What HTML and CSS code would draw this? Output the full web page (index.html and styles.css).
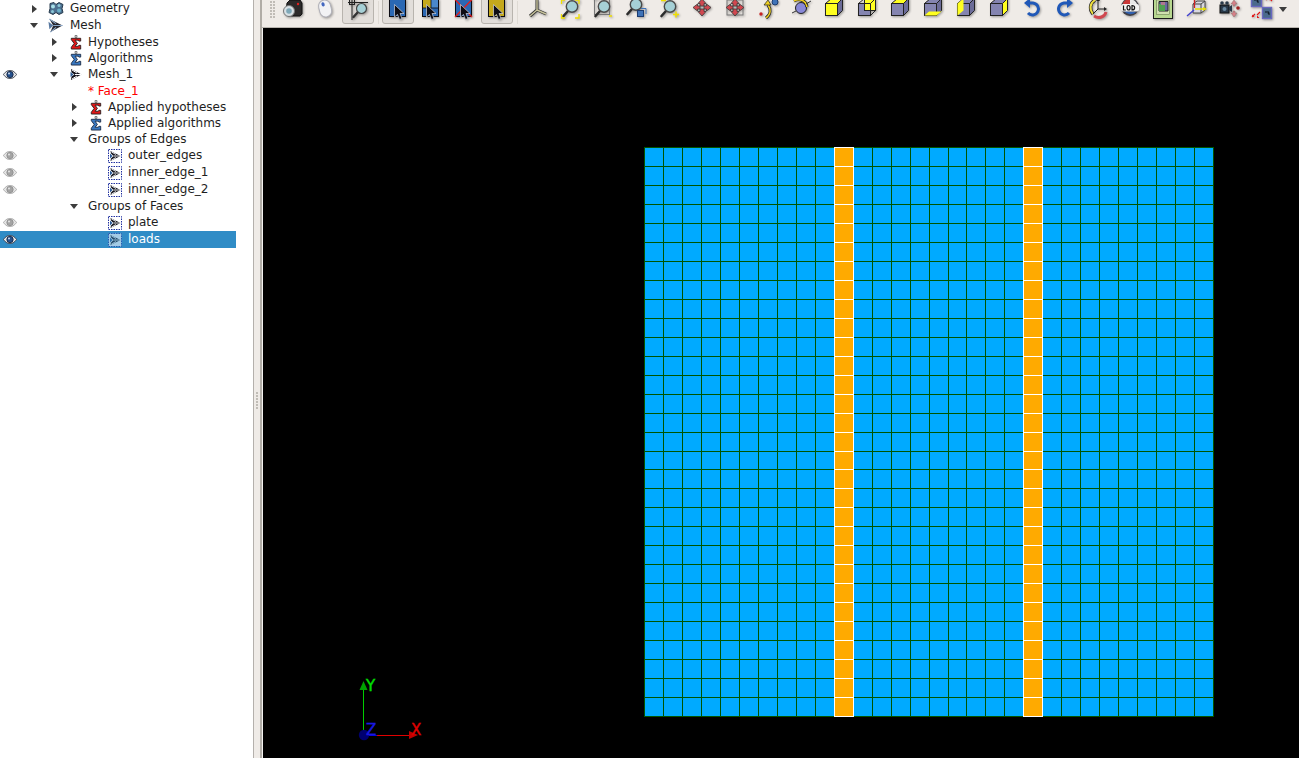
FILE: index.html
```html
<!DOCTYPE html>
<html lang="en">
<head>
<meta charset="utf-8">
<title>Mesh viewer</title>
<link rel="stylesheet" href="styles.css">
</head>
<body>
<svg class="defs" aria-hidden="true">
  <defs>
    <symbol id="geom" viewBox="0 0 16 14">
      <path d="M2 2L6 1L8 3L11 1L15 3L14 7L15 11L11 13L8 11L5 13L1 11L2 7Z" fill="#4c7090" stroke="#263a4c"/>
      <circle cx="5" cy="5" r="2" fill="#a8e0e8"/>
      <circle cx="11" cy="9" r="2" fill="#6ab0c8"/>
      <circle cx="11" cy="4" r="1.500" fill="#8cc8d8"/>
      <circle cx="4.500" cy="10" r="1.500" fill="#8cc8d8"/>
    </symbol>
    <symbol id="eye" viewBox="0 0 14 9">
      <path d="M0.5 4.5C3 1 5 0.5 7 0.5S11 1 13.500 4.5C11 8 9 8.5 7 8.5S3 8 0.5 4.5Z" fill="#e8e8ea" stroke="#3c4450"/>
      <circle cx="7" cy="4.5" r="3.2" fill="#24508c" stroke="#12203a" stroke-width=".8"/>
      <circle cx="6" cy="3.5" r="1" fill="#c8d8ee"/>
    </symbol>
    <symbol id="eye-off" viewBox="0 0 14 9">
      <path d="M0.5 4.5C3 1 5 0.5 7 0.5S11 1 13.500 4.5C11 8 9 8.5 7 8.5S3 8 0.5 4.5Z" fill="#e6e6e6" stroke="#a8a8a8"/>
      <circle cx="7" cy="4.5" r="3.2" fill="#a4a4a4" stroke="#8c8c8c" stroke-width=".8"/>
      <circle cx="6" cy="3.5" r="1" fill="#e4e4e4"/>
    </symbol>
    <symbol id="sigma-red" viewBox="0 0 12 16">
      <path d="M5 0.5h2v2h-2z" fill="none" stroke="#555" stroke-width=".8"/>
      <path d="M1 3.5H11V6.5H9L8.5 5.5H5L7.5 9L5 12H8.5L9 11H11V15H1V13L4 9L1 5Z" fill="#e01818" stroke="#1a1a1a" stroke-width=".9"/>
    </symbol>
    <symbol id="sigma-blue" viewBox="0 0 12 16">
      <path d="M5 0.5h2v2h-2z" fill="none" stroke="#555" stroke-width=".8"/>
      <path d="M1 3.5H11V6.5H9L8.5 5.5H5L7.5 9L5 12H8.5L9 11H11V15H1V13L4 9L1 5Z" fill="#3a78c0" stroke="#14243c" stroke-width=".9"/>
    </symbol>
    <symbol id="mesh" viewBox="0 0 12 12">
      <path d="M1 0.500L11.500 6L1 11.500L1.500 8L4.500 6L1.500 4Z" fill="#14141e"/>
      <path d="M2 1.500L7 4.500M5 6H11.500M2 10.500L7 7.500" stroke="#fff" stroke-width="1"/>
      <path d="M0.500 3.500L3.500 6L0.500 8.500Z" fill="#2c5c98"/>
    </symbol>
    <symbol id="mesh-group" viewBox="0 0 14 14">
      <rect x=".5" y=".5" width="13" height="13" fill="#fff" stroke="#2030a0" stroke-dasharray="1.500 1"/>
      <path d="M2.500 2L12.500 7L2.500 12L3 9.500L5.500 7L3 4.500Z" fill="#14141c"/>
      <path d="M3.500 3L8 5.500M5.500 7H12.500M3.500 11L8 8.500" stroke="#fff" stroke-width=".9"/>
      <path d="M2 4.500L4.500 7L2 9.500Z" fill="#2c5c98"/>
    </symbol>
    <symbol id="cursor" viewBox="0 0 11 16">
      <path d="M0.5 0.5V13L3.5 10.5L5.5 15.5L8 14.5L6 9.5H10Z" fill="#0c0c14" stroke="#cfd2e0" stroke-width=".7"/>
    </symbol>
    <symbol id="lens" viewBox="0 0 24 24">
      <path d="M9 15L4.500 20" stroke="#2c2c2c" stroke-width="2.600" stroke-linecap="round"/>
      <circle cx="13" cy="10.500" r="5.700" fill="#a6d0d6" stroke="#4a4a4a" stroke-width="1.400"/>
    </symbol>
    <symbol id="arrows" viewBox="0 0 24 24">
      <path d="M12 3L16 7.500H14V10H10V7.500H8Z M12 20L8 15.500H10V13H14V15.500H16Z M3 11.500L7.500 8V10H10V13H7.500V15Z M21 11.500L16.500 15V13H14V10H16.500V8Z" fill="#d04850" stroke="#3a3a3a" stroke-width=".8"/>
    </symbol>
  </defs>
</svg>
<div class="app">
  <aside class="tree">
    <div class="row tall"><span class="eye"></span><span class="indent i0"></span><span class="arrow right"></span><svg class="ic big"><use href="#geom"/></svg><span class="label">Geometry</span></div>
    <div class="row tall"><span class="eye"></span><span class="indent i0"></span><span class="arrow down"></span><svg class="ic big" viewBox="0 0 16 16"><path d="M1 1L15 8L2 15L5 8Z" fill="#26262e"/><path d="M1 1L8 6M5 8H15M2 15L8 10" stroke="#8ca8c8" stroke-width="1.200"/><path d="M0 4L5 8L1 12Z" fill="#5878a0"/></svg><span class="label">Mesh</span></div>
    <div class="row"><span class="eye"></span><span class="indent i1"></span><span class="arrow right"></span><svg class="ic"><use href="#sigma-red"/></svg><span class="label">Hypotheses</span></div>
    <div class="row"><span class="eye"></span><span class="indent i1"></span><span class="arrow right"></span><svg class="ic"><use href="#sigma-blue"/></svg><span class="label">Algorithms</span></div>
    <div class="row tall"><span class="eye"><svg class="eye-ic"><use href="#eye"/></svg></span><span class="indent i1"></span><span class="arrow down"></span><svg class="ic"><use href="#mesh"/></svg><span class="label">Mesh_1</span></div>
    <div class="row"><span class="eye"></span><span class="indent i1"></span><span class="arrow"></span><span class="ic"></span><span class="label red">* Face_1</span></div>
    <div class="row"><span class="eye"></span><span class="indent i2"></span><span class="arrow right"></span><svg class="ic"><use href="#sigma-red"/></svg><span class="label">Applied hypotheses</span></div>
    <div class="row"><span class="eye"></span><span class="indent i2"></span><span class="arrow right"></span><svg class="ic"><use href="#sigma-blue"/></svg><span class="label">Applied algorithms</span></div>
    <div class="row"><span class="eye"></span><span class="indent i2"></span><span class="arrow down"></span><span class="label after-arrow">Groups of Edges</span></div>
    <div class="row tall"><span class="eye"><svg class="eye-ic"><use href="#eye-off"/></svg></span><span class="indent i3"></span><span class="arrow"></span><svg class="ic grp"><use href="#mesh-group"/></svg><span class="label">outer_edges</span></div>
    <div class="row tall"><span class="eye"><svg class="eye-ic"><use href="#eye-off"/></svg></span><span class="indent i3"></span><span class="arrow"></span><svg class="ic grp"><use href="#mesh-group"/></svg><span class="label">inner_edge_1</span></div>
    <div class="row tall"><span class="eye"><svg class="eye-ic"><use href="#eye-off"/></svg></span><span class="indent i3"></span><span class="arrow"></span><svg class="ic grp"><use href="#mesh-group"/></svg><span class="label">inner_edge_2</span></div>
    <div class="row"><span class="eye"></span><span class="indent i2"></span><span class="arrow down"></span><span class="label after-arrow">Groups of Faces</span></div>
    <div class="row tall"><span class="eye"><svg class="eye-ic"><use href="#eye-off"/></svg></span><span class="indent i3"></span><span class="arrow"></span><svg class="ic grp"><use href="#mesh-group"/></svg><span class="label">plate</span></div>
    <div class="row tall selected"><span class="eye"><svg class="eye-ic"><use href="#eye"/></svg></span><span class="indent i3"></span><span class="arrow"></span><svg class="ic grp dim"><use href="#mesh-group"/></svg><span class="label">loads</span></div>
  </aside>
  <div class="splitter"><span></span><span></span><span></span><span></span><span></span><span></span></div>
  <main class="work">
    <div class="toolbar">
      <div class="grip"></div>
      <button class="tb"><svg viewBox="0 0 24 24"><path d="M7 7L10 4H20L22 7V18L20 20H8L6 17Z" fill="#2c2a2a" stroke="#111"/><circle cx="18" cy="8" r="1.200" fill="#e02020"/><circle cx="9" cy="15" r="5.500" fill="#d8e0e4" stroke="#777"/><circle cx="9" cy="15" r="2.800" fill="#7fa8b8"/></svg></button>
      <button class="tb"><svg viewBox="0 0 24 24"><g transform="rotate(-14 12 12)"><rect x="6" y="4" width="12" height="17" rx="6" fill="#f2f2f4" stroke="#b0b0b8"/><ellipse cx="11" cy="8" rx="1.600" ry="2.200" fill="#4468c0"/></g></svg></button>
      <button class="tb on"><svg viewBox="0 0 24 24"><path d="M6 3V24M2 6.500H22" stroke="#222" fill="none"/><rect x="3.500" y="3.500" width="5" height="5" fill="none" stroke="#222"/><path d="M12 16L7.500 21" stroke="#333" stroke-width="2.400" stroke-linecap="round"/><circle cx="15.500" cy="12.500" r="5" fill="#a6d0d6" stroke="#444" stroke-width="1.200"/></svg></button>
      <div class="sep"></div>
      <button class="tb on"><svg viewBox="0 0 24 24"><rect x="3.500" y="3.500" width="16" height="17" fill="#2a68b4" stroke="#0c0c14"/><use href="#cursor" x="8" y="8" width="11" height="16"/></svg></button>
      <button class="tb"><svg viewBox="0 0 24 24"><rect x="3.500" y="3.500" width="16" height="17" fill="#2a68b4" stroke="#0c0c14"/><rect x="4" y="4" width="8" height="8" fill="#c4a81c"/><rect x="12" y="4" width="7" height="8" fill="#4a88cc"/><path d="M12 4V20M4 12H19" stroke="#0c0c14" stroke-width=".8"/><use href="#cursor" x="7" y="8" width="11" height="16"/></svg></button>
      <button class="tb"><svg viewBox="0 0 24 24"><rect x="3.500" y="3.500" width="16" height="17" fill="#2a68b4" stroke="#0c0c14"/><path d="M3 3.500L20 21M20 3.500L3 21" stroke="#e02020" stroke-width="1.300"/><use href="#cursor" x="8" y="8" width="11" height="16"/></svg></button>
      <button class="tb on"><svg viewBox="0 0 24 24"><rect x="3.500" y="3.500" width="16" height="17" fill="#c4a81c" stroke="#0c0c14"/><use href="#cursor" x="8" y="8" width="11" height="16"/></svg></button>
      <div class="sep wide"></div>
      <button class="tb"><svg viewBox="0 0 24 24"><path d="M11 4V14L4 20M11 14L20 18" stroke="#333" stroke-width="3" fill="none"/><path d="M11 4V14L4 20M11 14L20 18" stroke="#c8c49c" stroke-width="1.400" fill="none"/></svg></button>
      <button class="tb"><svg viewBox="0 0 24 24"><use href="#lens" width="24" height="24"/><path d="M2.500 8V4H6M16 4H20V8M2.500 18V22H6M16 22H20V18" stroke="#f0e000" stroke-width="1.300" fill="none"/></svg></button>
      <button class="tb"><svg viewBox="0 0 24 24"><rect x="3.500" y="3.500" width="15" height="15" fill="none" stroke="#777"/><use href="#lens" width="24" height="24"/><path d="M2 2.500H5M18 20H21" stroke="#f0e000" stroke-width="1.500"/></svg></button>
      <button class="tb"><svg viewBox="0 0 24 24"><use href="#lens" x="-1" y="-2" width="24" height="24"/><rect x="13.500" y="14.500" width="6" height="6" fill="#3f73b8" stroke="#1c3c70"/><path d="M17 12.500H22V18" stroke="#3f73b8" fill="none"/></svg></button>
      <button class="tb"><svg viewBox="0 0 24 24"><use href="#lens" width="24" height="24"/><path d="M4 4.500H9M16 18.500H22M19 15.500V21.500" stroke="#f0e000" stroke-width="1.500"/></svg></button>
      <button class="tb"><svg viewBox="0 0 24 24"><use href="#arrows" width="24" height="24"/></svg></button>
      <button class="tb"><svg viewBox="0 0 24 24"><rect x="4" y="4" width="16" height="15" fill="none" stroke="#777"/><use href="#arrows" width="24" height="24"/></svg></button>
      <button class="tb"><svg viewBox="0 0 24 24"><circle cx="19" cy="6" r="3" fill="#3f73b8" stroke="#1c3c70"/><path d="M10 22C15 18 15 13 12 9" stroke="#222" stroke-width="3" fill="none"/><path d="M10 22C15 18 15 13 12 9" stroke="#f0d020" stroke-width="1.600" fill="none"/><path d="M8 9H15L12 4Z" fill="#f0d020" stroke="#222" stroke-width=".7"/><circle cx="5" cy="18" r="1.700" fill="#c82020"/></svg></button>
      <button class="tb"><svg viewBox="0 0 24 24"><circle cx="12" cy="12" r="5.500" fill="#8888d8" stroke="#222"/><path d="M5 5C10 2 17 4 18 11" stroke="#222" stroke-width="3" fill="none"/><path d="M5 5C10 2 17 4 18 11" stroke="#f0d020" stroke-width="1.600" fill="none"/><path d="M3 17L7 15M17 8L22 5" stroke="#333"/></svg></button>
      <button class="tb"><svg viewBox="0 0 24 24"><path d="M3.500 7.500L9.500 2.500H20.500L15.500 7.500Z" fill="#ffff20" stroke="#222"/><path d="M15.500 7.500L20.500 2.500V14.500L15.500 19.500Z" fill="#6c6c98" stroke="#222"/><rect x="3.500" y="7.500" width="12" height="12" fill="#ffff20" stroke="#222"/></svg></button>
      <button class="tb"><svg viewBox="0 0 24 24"><rect x="3.500" y="7.500" width="12" height="12" fill="#8484b0" stroke="#222"/><rect x="9.500" y="2.500" width="11" height="12" fill="#ffff20" stroke="#222"/><path d="M3.500 7.500L9.500 2.500M15.500 19.500L20.500 14.500M3.500 7.500H15.500V19.500M15.500 7.500L20.500 2.500" stroke="#222" fill="none"/></svg></button>
      <button class="tb"><svg viewBox="0 0 24 24"><rect x="3.500" y="7.500" width="12" height="12" fill="#8484b0" stroke="#222"/><path d="M3.500 7.500L9.500 2.500H20.500L15.500 7.500Z" fill="#ffff20" stroke="#222"/><path d="M15.500 7.500L20.500 2.500V14.500L15.500 19.500Z" fill="#6c6c98" stroke="#222"/></svg></button>
      <button class="tb"><svg viewBox="0 0 24 24"><rect x="3.500" y="7.500" width="12" height="12" fill="#8484b0" stroke="#222"/><path d="M3.500 7.500L9.500 2.500H20.500L15.500 7.500Z" fill="#8484b0" stroke="#222"/><path d="M15.500 7.500L20.500 2.500V14.500L15.500 19.500Z" fill="#6c6c98" stroke="#222"/><path d="M3.500 19.500L8 15.500H20.500L15.500 19.500Z" fill="#ffff20"/></svg></button>
      <button class="tb"><svg viewBox="0 0 24 24"><rect x="3.500" y="7.500" width="12" height="12" fill="#8484b0" stroke="#222"/><path d="M3.500 7.500L9.500 2.500H20.500L15.500 7.500Z" fill="#8484b0" stroke="#222"/><path d="M15.500 7.500L20.500 2.500V14.500L15.500 19.500Z" fill="#6c6c98" stroke="#222"/><path d="M3.500 7.500L9.500 2.500V14.500L3.500 19.500Z" fill="#ffff20"/></svg></button>
      <button class="tb"><svg viewBox="0 0 24 24"><rect x="3.500" y="7.500" width="12" height="12" fill="#8484b0" stroke="#222"/><path d="M3.500 7.500L9.500 2.500H20.500L15.500 7.500Z" fill="#8484b0" stroke="#222"/><path d="M15.500 7.500L20.500 2.500V14.500L15.500 19.500Z" fill="#ffff20" stroke="#222"/></svg></button>
      <button class="tb"><svg viewBox="0 0 24 24"><path d="M8 7H13A6 6 0 1 1 8 17" fill="none" stroke="#2058b8" stroke-width="3"/><path d="M10 2V12L4 7Z" fill="#2058b8"/></svg></button>
      <button class="tb"><svg viewBox="0 0 24 24"><path d="M16 7H11A6 6 0 1 0 16 17" fill="none" stroke="#2058b8" stroke-width="3"/><path d="M14 2V12L20 7Z" fill="#2058b8"/></svg></button>
      <button class="tb"><svg viewBox="0 0 24 24"><path d="M7 18C3 13 4 7 9 4" stroke="#222" stroke-width="3.400" fill="none"/><path d="M7 18C3 13 4 7 9 4" stroke="#f0e040" stroke-width="2" fill="none"/><path d="M8 20C13 23 19 21 20 16" stroke="#d04850" stroke-width="3" fill="none"/><path d="M12 4V13L19 13M12 13L7 18" stroke="#222" fill="none"/><path d="M10 5L12 2L14 5M18 11L21 13L18 15" fill="#222"/></svg></button>
      <button class="tb"><svg viewBox="0 0 24 24"><circle cx="12" cy="11" r="9" fill="#404048"/><path d="M5 7A8 8 0 0 1 12 3V8H5Z" fill="#c83838"/><path d="M12 3A8 8 0 0 1 19 8H12Z" fill="#e8e8e8"/><path d="M6 15A8 8 0 0 0 18 16Z" fill="#3060b0"/><rect x="3" y="8" width="18" height="7.500" rx="2" fill="#f2f2f2"/><path d="M5.500 9.500V14H7.800M10.500 9.500A1.500 2.200 0 1 0 10.600 14A1.500 2.200 0 1 0 10.500 9.500M14 9.500V14C17.500 14 17.500 9.500 14 9.500Z" fill="none" stroke="#111" stroke-width="1.200"/></svg></button>
      <button class="tb"><svg viewBox="0 0 24 24"><rect x="2.500" y="0" width="19" height="22.500" fill="#b8d890" stroke="#1c1c1c"/><rect x="5.500" y="4" width="13" height="14.500" fill="#d0e0b0" stroke="#6c8050" stroke-width=".6"/><path d="M8 5.500H17V15H8Z" fill="#6868a0" stroke="#222"/><rect x="8" y="8" width="6" height="7" fill="#50a050"/><rect x="10" y="6" width="4" height="3" fill="#b07890"/></svg></button>
      <button class="tb"><svg viewBox="0 0 24 24"><path d="M9 8L13 5H21V14L17 17H9Z" fill="#d8d8e0" stroke="#444"/><path d="M9 8H17V17M17 8L21 5" fill="none" stroke="#444"/><path d="M10.500 3V12" stroke="#d02020" stroke-width="1.300"/><path d="M9 3.500L10.500 1L12 3.500Z" fill="#d02020"/><path d="M11 13H20" stroke="#e8e000" stroke-width="1.500"/><path d="M19 11L23 13L19 15Z" fill="#e8e000"/><path d="M10 14L3 20" stroke="#4040d0" stroke-width="1.400"/></svg></button>
      <button class="tb"><svg viewBox="0 0 24 24"><rect x="3" y="9" width="9" height="8" fill="#283848" stroke="#111"/><circle cx="5" cy="7" r="1.800" fill="#283848"/><circle cx="10" cy="7" r="1.800" fill="#283848"/><path d="M12 11L15 9V16L12 14Z" fill="#283848"/><circle cx="7.500" cy="13" r="2" fill="#6888a0"/><path d="M17 4L14 8H16V10H18V8H20ZM17 21L14 17H16V15H18V17H20Z" fill="#d88088" stroke="#8c6c6c" stroke-width=".5"/><circle cx="21" cy="12" r="1.800" fill="#a02020"/></svg></button>
      <button class="tb"><svg viewBox="0 0 24 24"><rect x="1.500" y="-1.500" width="10" height="12" fill="#4a6a8c" stroke="#6868c0" stroke-width="1.400"/><rect x="12.500" y="11.500" width="9" height="11" fill="#4a6a8c" stroke="#6868c0" stroke-width="1.400"/><path d="M4 4H8L7 6H9M15 16H19L18 18H20" stroke="#0c1420" fill="none"/><path d="M14 1L17 4M19 2L22 5M2 21L5 18M7 19L10 16" stroke="#e01818" stroke-width="1.100"/><path d="M14 1H16.500L14 3.500ZM19 2H21.500L19 4.500ZM2 21V18.500L4.500 21ZM7 22V19.500L9.500 22Z" fill="#e01818"/></svg></button>
      <div class="menu-arrow"></div>
    </div>
    <div class="viewport">
      <svg class="mesh" width="570" height="570" viewBox="0 0 570 570">
        <rect width="570" height="570" fill="#00aaff"/>
        <rect x="190" width="19" height="570" fill="#ffaa00"/>
        <rect x="379" width="19" height="570" fill="#ffaa00"/>
        <path class="grid" d="M.5 0V570M19.500 0V570M38.500 0V570M57.500 0V570M76.500 0V570M95.500 0V570M114.500 0V570M133.500 0V570M152.500 0V570M171.500 0V570M228.500 0V570M247.500 0V570M266.500 0V570M285.500 0V570M304.500 0V570M322.500 0V570M341.500 0V570M360.500 0V570M417.500 0V570M436.500 0V570M455.500 0V570M474.500 0V570M493.500 0V570M512.500 0V570M531.500 0V570M550.500 0V570M569.500 0V570
          M0 .5H190M0 19.500H190M0 38.500H190M0 57.500H190M0 76.500H190M0 95.500H190M0 114.500H190M0 133.500H190M0 152.500H190M0 171.500H190M0 190.500H190M0 209.500H190M0 228.500H190M0 247.500H190M0 266.500H190M0 285.500H190M0 304.500H190M0 322.500H190M0 341.500H190M0 360.500H190M0 379.500H190M0 398.500H190M0 417.500H190M0 436.500H190M0 455.500H190M0 474.500H190M0 493.500H190M0 512.500H190M0 531.500H190M0 550.500H190M0 569.500H190
          M209 .5H379M209 19.500H379M209 38.500H379M209 57.500H379M209 76.500H379M209 95.500H379M209 114.500H379M209 133.500H379M209 152.500H379M209 171.500H379M209 190.500H379M209 209.500H379M209 228.500H379M209 247.500H379M209 266.500H379M209 285.500H379M209 304.500H379M209 322.500H379M209 341.500H379M209 360.500H379M209 379.500H379M209 398.500H379M209 417.500H379M209 436.500H379M209 455.500H379M209 474.500H379M209 493.500H379M209 512.500H379M209 531.500H379M209 550.500H379M209 569.500H379
          M398 .5H570M398 19.500H570M398 38.500H570M398 57.500H570M398 76.500H570M398 95.500H570M398 114.500H570M398 133.500H570M398 152.500H570M398 171.500H570M398 190.500H570M398 209.500H570M398 228.500H570M398 247.500H570M398 266.500H570M398 285.500H570M398 304.500H570M398 322.500H570M398 341.500H570M398 360.500H570M398 379.500H570M398 398.500H570M398 417.500H570M398 436.500H570M398 455.500H570M398 474.500H570M398 493.500H570M398 512.500H570M398 531.500H570M398 550.500H570M398 569.500H570"/>
        <path class="loadlines" d="M190.500 0V570M209.500 0V570M379.500 0V570M398.500 0V570
          M190 .5H209M190 19.500H209M190 38.500H209M190 57.500H209M190 76.500H209M190 95.500H209M190 114.500H209M190 133.500H209M190 152.500H209M190 171.500H209M190 190.500H209M190 209.500H209M190 228.500H209M190 247.500H209M190 266.500H209M190 285.500H209M190 304.500H209M190 322.500H209M190 341.500H209M190 360.500H209M190 379.500H209M190 398.500H209M190 417.500H209M190 436.500H209M190 455.500H209M190 474.500H209M190 493.500H209M190 512.500H209M190 531.500H209M190 550.500H209M190 569.500H209
          M379 .5H398M379 19.500H398M379 38.500H398M379 57.500H398M379 76.500H398M379 95.500H398M379 114.500H398M379 133.500H398M379 152.500H398M379 171.500H398M379 190.500H398M379 209.500H398M379 228.500H398M379 247.500H398M379 266.500H398M379 285.500H398M379 304.500H398M379 322.500H398M379 341.500H398M379 360.500H398M379 379.500H398M379 398.500H398M379 417.500H398M379 436.500H398M379 455.500H398M379 474.500H398M379 493.500H398M379 512.500H398M379 531.500H398M379 550.500H398M379 569.500H398"/>
      </svg>
      <svg class="axes" width="70" height="70" viewBox="0 0 70 70">
        <path d="M6.500 58V14" stroke="#00cc00"/>
        <path d="M6.500 7L10.500 16H2.500Z" fill="#00a000"/>
        <path d="M10 61.500H54" stroke="#e00000"/>
        <path d="M10 61.500H20" stroke="#0000e0"/>
        <path d="M61 61L52 57V65Z" fill="#c00000"/>
        <circle cx="7" cy="61" r="5.200" fill="#000070"/>
        <text class="ax ax-y" x="9" y="17">Y</text>
        <text class="ax ax-z" x="9" y="61">Z</text>
        <text class="ax ax-x" x="54" y="61">X</text>
      </svg>
    </div>
  </main>
</div>
</body>
</html>
```

FILE: styles.css
```css
* {
  box-sizing: border-box;
}

html,
body {
  margin: 0;
  height: 100%;
  overflow: hidden;
}

body {
  font-family: "DejaVu Sans", sans-serif;
  font-size: 12px;
  color: #1e1e1e;
  background: #efebe7;
}

.defs {
  position: absolute;
  width: 0;
  height: 0;
}

.app {
  display: flex;
  height: 100vh;
}

/* Object browser */
.tree {
  flex: 0 0 254px;
  background: #fff;
  border-right: 1px solid #b4b0ac;
  padding-right: 17px;
}

.row {
  display: flex;
  align-items: center;
  height: 16px;
  white-space: nowrap;
}

.row.tall {
  height: 17px;
}

.row.selected {
  background: #308cc6;
  color: #fff;
}

.label {
  align-self: flex-start;
  margin-top: 1px;
  line-height: 14px;
}

.label.after-arrow {
  margin-left: 8px;
}

.eye {
  flex: 0 0 20px;
  display: flex;
  align-items: center;
  padding-left: 3px;
}

.eye-ic {
  width: 14px;
  height: 9px;
}

.indent {
  flex: none;
}

.i0 { width: 8px; }
.i1 { width: 28px; }
.i2 { width: 48px; }
.i3 { width: 68px; }

.arrow {
  flex: 0 0 12px;
  display: flex;
  justify-content: center;
  align-items: center;
}

.arrow.right::before {
  content: "";
  border-left: 5px solid #3c3c3c;
  border-top: 4.5px solid transparent;
  border-bottom: 4.5px solid transparent;
  margin-left: 1px;
}

.arrow.down::before {
  content: "";
  border-top: 5px solid #3c3c3c;
  border-left: 4.5px solid transparent;
  border-right: 4.5px solid transparent;
}

.ic {
  flex: none;
  display: block;
  width: 12px;
  height: 15px;
  margin: 0 6px 0 10px;
}

.ic.big {
  width: 16px;
  height: 15px;
  margin-left: 8px;
}

.ic.grp {
  width: 14px;
  height: 14px;
  margin-left: 8px;
}

.ic.dim {
  opacity: 0.55;
}

.red {
  color: #ff0000;
}

/* Splitter */
.splitter {
  flex: 0 0 6px;
  display: flex;
  flex-direction: column;
  align-items: center;
  justify-content: center;
  gap: 1px;
  padding-top: 42px;
}

.splitter span {
  width: 2px;
  height: 2px;
  background: #c0bcb6;
}

/* Toolbar and view */
.work {
  flex: 1;
  min-width: 0;
  display: flex;
  flex-direction: column;
  border-left: 2px solid #b0aca6;
}

.toolbar {
  flex: 0 0 28px;
  display: flex;
  align-items: flex-end;
  padding: 0 0 3px 8px;
  background: #efebe7;
  border-bottom: 1px solid #b8b4ae;
  overflow: hidden;
}

.grip {
  flex: 0 0 6px;
  align-self: flex-start;
  height: 18px;
  margin-top: 1px;
  background-image: radial-gradient(circle at 1px 1px, #c0bcb6 1px, transparent 1.2px);
  background-size: 3px 3px;
}

.tb {
  flex: 0 0 32px;
  height: 32px;
  margin: 0 0.95px 0 0;
  padding: 0;
  display: flex;
  align-items: center;
  justify-content: center;
  background: transparent;
  border: 1px solid transparent;
  border-radius: 3px;
}

.tb.on {
  background: #e2deda;
  border-color: #b8b4ae;
}

.tb svg {
  display: block;
  width: 24px;
  height: 24px;
  overflow: visible;
  filter: drop-shadow(1px 1px 1px rgba(0, 0, 0, 0.35));
}

.sep {
  flex: 0 0 7px;
  height: 23px;
  align-self: flex-end;
  background: linear-gradient(#dedad4, #dedad4) 3px 0 / 1px 100% no-repeat;
}

.sep.wide {
  flex-basis: 8px;
}

.menu-arrow {
  align-self: flex-start;
  width: 0;
  height: 0;
  margin-top: 7px;
  border-top: 5px solid #3c3c3c;
  border-left: 4.5px solid transparent;
  border-right: 4.5px solid transparent;
}

.viewport {
  position: relative;
  flex: 1;
  background: #000;
  border-left: 1px solid #f4f2f0;
  padding: 119px 0 0 381px;
  overflow: hidden;
}

.mesh {
  display: block;
}

.grid {
  fill: none;
  stroke: #005500;
  stroke-width: 1;
  shape-rendering: crispEdges;
}

.loadlines {
  fill: none;
  stroke: #fff;
  stroke-width: 1;
  shape-rendering: crispEdges;
}

.axes {
  position: absolute;
  left: 94px;
  top: 646px;
  overflow: visible;
}

.ax {
  font-family: "DejaVu Sans", sans-serif;
  font-size: 15px;
  stroke-width: 0.4px;
}

.ax-y { fill: #00e000; stroke: #00e000; }
.ax-z { fill: #1818e0; stroke: #1818e0; }
.ax-x { fill: #e00000; stroke: #e00000; }
```
